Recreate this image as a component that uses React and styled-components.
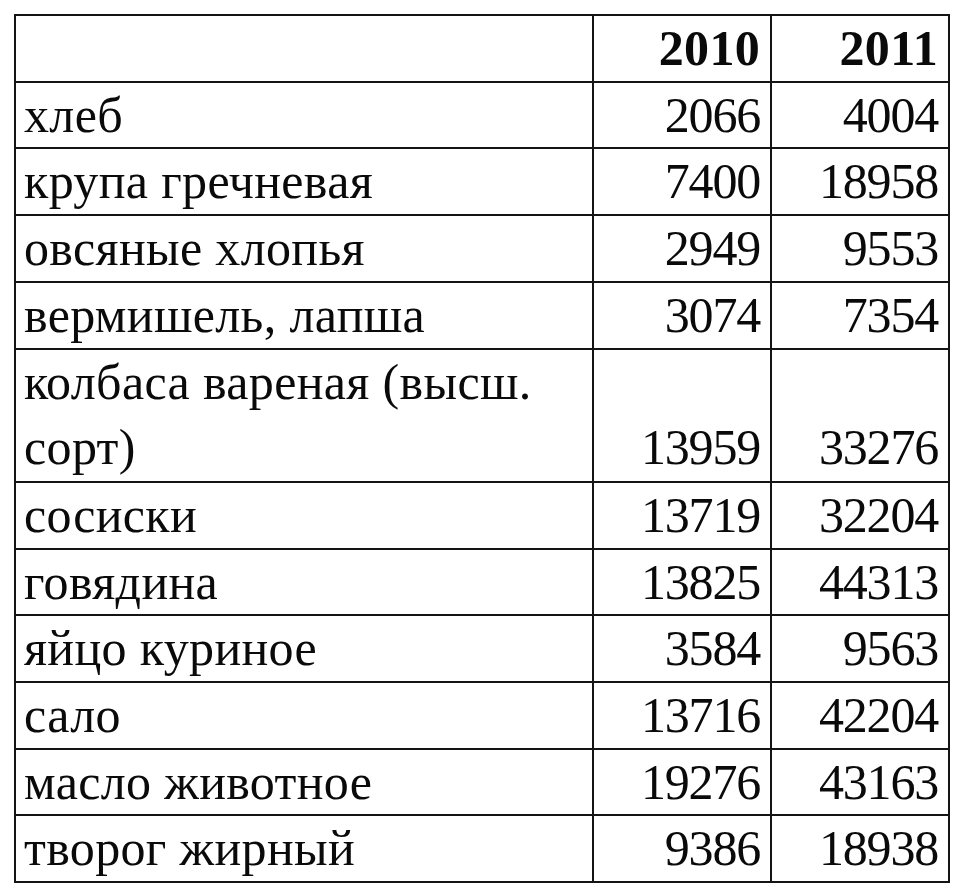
import React from 'react';
import styled, { createGlobalStyle } from 'styled-components';

const GlobalStyle = createGlobalStyle`
  html, body {
    margin: 0;
    padding: 0;
    background: #ffffff;
  }
  body {
    font-family: "Liberation Serif", "Times New Roman", serif;
    color: #0a0a0a;
  }
`;

const Page = styled.div`
  padding: 14px 0 0 14px;
  width: 960px;
  height: 896px;
  box-sizing: border-box;
`;

const Table = styled.table`
  border-collapse: collapse;
  table-layout: fixed;
  width: 934px;
  font-family: "Liberation Serif", "Times New Roman", serif;
  font-size: 50px;
  color: #0a0a0a;
`;

const Row = styled.tr`
  height: ${({ $tall }) => ($tall ? '133.4px' : '66.7px')};
`;

// numbers are a touch narrower in the scan, names a touch wider
const Cell = styled.td`
  border: 2px solid #141414;
  padding: ${({ $num }) => ($num ? '0 10px 0 8px' : '0 9px 0 8px')};
  line-height: ${({ $tall }) => ($tall ? '65.7px' : '64.7px')};
  text-align: ${({ $num }) => ($num ? 'right' : 'left')};
  vertical-align: bottom;
  font-weight: ${({ $head }) => ($head ? 700 : 400)};
  letter-spacing: ${({ $num, $head }) => ($head ? '0.3px' : $num ? '-1.2px' : '0.35px')};
  white-space: ${({ $num }) => ($num ? 'nowrap' : 'normal')};
`;

const rows = [
  ['хлеб', '2066', '4004'],
  ['крупа гречневая', '7400', '18958'],
  ['овсяные хлопья', '2949', '9553'],
  ['вермишель, лапша', '3074', '7354'],
  ['колбаса вареная (высш. сорт)', '13959', '33276', true],
  ['сосиски', '13719', '32204'],
  ['говядина', '13825', '44313'],
  ['яйцо куриное', '3584', '9563'],
  ['сало', '13716', '42204'],
  ['масло животное', '19276', '43163'],
  ['творог жирный', '9386', '18938'],
];

export default function App() {
  return (
    <Page>
      <GlobalStyle />
      <Table>
        <colgroup>
          <col style={{ width: 578 }} />
          <col style={{ width: 178 }} />
          <col style={{ width: 178 }} />
        </colgroup>
        <tbody>
          <Row>
            <Cell />
            <Cell $num $head>2010</Cell>
            <Cell $num $head>2011</Cell>
          </Row>
          {rows.map(([name, a, b, tall]) => (
            <Row key={name} $tall={tall}>
              <Cell $tall={tall}>{name}</Cell>
              <Cell $num $tall={tall}>{a}</Cell>
              <Cell $num $tall={tall}>{b}</Cell>
            </Row>
          ))}
        </tbody>
      </Table>
    </Page>
  );
}
